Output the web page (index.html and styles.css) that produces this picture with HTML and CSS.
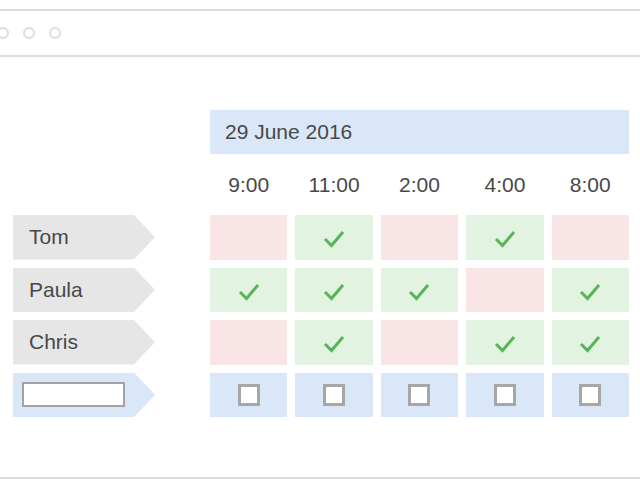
FILE: index.html
```html
<!DOCTYPE html>
<html>
<head>
<meta charset="utf-8">
<link rel="stylesheet" href="styles.css">
</head>
<body>
<div class="window">
  <div class="titlebar">
    <span class="dot"></span><span class="dot"></span><span class="dot"></span>
  </div>
  <div class="content">
    <div class="schedule">
      <div class="corner"></div>
      <div class="date">29 June 2016</div>

      <div class="corner"></div>
      <div class="time">9:00</div>
      <div class="time">11:00</div>
      <div class="time">2:00</div>
      <div class="time">4:00</div>
      <div class="time">8:00</div>

      <div class="name"><span>Tom</span></div>
      <div class="cell no"></div>
      <div class="cell yes"><svg class="check" viewBox="0 0 22 20"><polyline points="2,11 8.5,17.5 20,4"/></svg></div>
      <div class="cell no"></div>
      <div class="cell yes"><svg class="check" viewBox="0 0 22 20"><polyline points="2,11 8.5,17.5 20,4"/></svg></div>
      <div class="cell no"></div>

      <div class="name"><span>Paula</span></div>
      <div class="cell yes"><svg class="check" viewBox="0 0 22 20"><polyline points="2,11 8.5,17.5 20,4"/></svg></div>
      <div class="cell yes"><svg class="check" viewBox="0 0 22 20"><polyline points="2,11 8.5,17.5 20,4"/></svg></div>
      <div class="cell yes"><svg class="check" viewBox="0 0 22 20"><polyline points="2,11 8.5,17.5 20,4"/></svg></div>
      <div class="cell no"></div>
      <div class="cell yes"><svg class="check" viewBox="0 0 22 20"><polyline points="2,11 8.5,17.5 20,4"/></svg></div>

      <div class="name"><span>Chris</span></div>
      <div class="cell no"></div>
      <div class="cell yes"><svg class="check" viewBox="0 0 22 20"><polyline points="2,11 8.5,17.5 20,4"/></svg></div>
      <div class="cell no"></div>
      <div class="cell yes"><svg class="check" viewBox="0 0 22 20"><polyline points="2,11 8.5,17.5 20,4"/></svg></div>
      <div class="cell yes"><svg class="check" viewBox="0 0 22 20"><polyline points="2,11 8.5,17.5 20,4"/></svg></div>

      <div class="name new"><span class="input"></span></div>
      <div class="cell pick"><span class="box"></span></div>
      <div class="cell pick"><span class="box"></span></div>
      <div class="cell pick"><span class="box"></span></div>
      <div class="cell pick"><span class="box"></span></div>
      <div class="cell pick"><span class="box"></span></div>
    </div>
  </div>
</div>
</body>
</html>
```

FILE: styles.css
```css
html, body {
  margin: 0;
  padding: 0;
  background: #ffffff;
  overflow: hidden;
}

body {
  font-family: "Liberation Sans", Arial, sans-serif;
  color: #484848;
  width: 640px;
  height: 480px;
}

.window {
  margin-top: 9px;
  border-top: 2px solid #dddddd;
  border-bottom: 2px solid #dddddd;
  height: 470px;
  box-sizing: border-box;
}

.titlebar {
  height: 44px;
  border-bottom: 2px solid #dddddd;
  display: flex;
  align-items: center;
  gap: 14px;
  margin-left: -3px;
}

.dot {
  width: 12px;
  height: 12px;
  box-sizing: border-box;
  border: 2px solid #dddddd;
  border-radius: 50%;
}

.content {
  padding: 53px 11px 0 13px;
}

.schedule {
  display: grid;
  grid-template-columns: 189px repeat(5, 1fr);
  grid-template-rows: 44px 45px repeat(4, 44.5px);
  column-gap: 8px;
  row-gap: 8px;
}

.date {
  grid-column: 2 / span 5;
  background: #dae7f8;
  display: flex;
  align-items: center;
  padding-left: 15px;
  font-size: 21px;
}

.time {
  display: flex;
  align-items: center;
  justify-content: center;
  font-size: 21px;
}

.name {
  width: 142px;
  background: #e6e6e6;
  clip-path: polygon(0 0, calc(100% - 21px) 0, 100% 50%, calc(100% - 21px) 100%, 0 100%);
  display: flex;
  align-items: center;
  padding-left: 16px;
  box-sizing: border-box;
  font-size: 21px;
}

.name.new {
  background: #dae7f8;
  padding-left: 9px;
}

.input {
  width: 103px;
  height: 25px;
  box-sizing: border-box;
  border: 2px solid #a3a3a3;
  background: #ffffff;
  margin-top: -1px;
}

.cell {
  display: flex;
  align-items: center;
  justify-content: center;
}

.cell.no { background: #f9e5e5; }
.cell.yes { background: #e2f3e2; }
.cell.pick { background: #dae7f8; }

.check {
  width: 22px;
  height: 20px;
  margin-top: 2px;
}

.check polyline {
  fill: none;
  stroke: #57b457;
  stroke-width: 3;
  stroke-linejoin: miter;
  stroke-linecap: butt;
}

.box {
  width: 22px;
  height: 22px;
  box-sizing: border-box;
  border: 3px solid #a6a6a6;
  background: #ffffff;
}
```
